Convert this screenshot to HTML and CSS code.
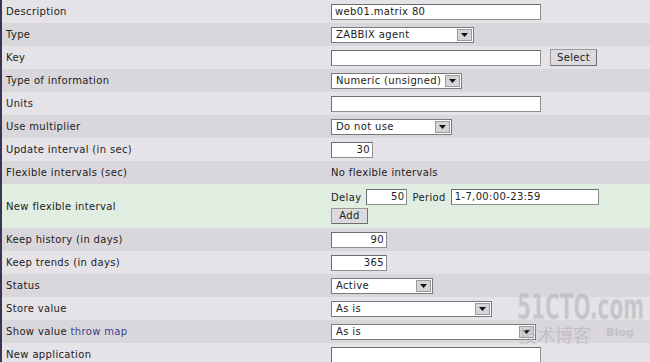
FILE: index.html
```html
<!DOCTYPE html>
<html lang="en">
<head>
    <meta charset="UTF-8">
    <title>Item</title>
    <link rel="stylesheet" href="styles.css">
</head>
<body>
<div id="form">
    <div class="row light">
        <div class="label">Description</div>
        <div class="value"><span class="input w210">web01.matrix 80</span></div>
    </div>
    <div class="row dark">
        <div class="label">Type</div>
        <div class="value"><span class="select w143"><span class="text">ZABBIX agent</span><span class="arrow"><svg width="7" height="4" viewBox="0 0 7 4"><path d="M0 0H7L3.5 4Z" fill="#111"/></svg></span></span></div>
    </div>
    <div class="row light">
        <div class="label">Key</div>
        <div class="value"><span class="input w210"></span><span class="button btn-select">Select</span></div>
    </div>
    <div class="row dark">
        <div class="label">Type of information</div>
        <div class="value"><span class="select w131"><span class="text">Numeric (unsigned)</span><span class="arrow"><svg width="7" height="4" viewBox="0 0 7 4"><path d="M0 0H7L3.5 4Z" fill="#111"/></svg></span></span></div>
    </div>
    <div class="row light">
        <div class="label">Units</div>
        <div class="value"><span class="input w210"></span></div>
    </div>
    <div class="row dark">
        <div class="label">Use multiplier</div>
        <div class="value"><span class="select w121"><span class="text">Do not use</span><span class="arrow"><svg width="7" height="4" viewBox="0 0 7 4"><path d="M0 0H7L3.5 4Z" fill="#111"/></svg></span></span></div>
    </div>
    <div class="row light">
        <div class="label">Update interval (in sec)</div>
        <div class="value"><span class="input w42 num">30</span></div>
    </div>
    <div class="row dark">
        <div class="label">Flexible intervals (sec)</div>
        <div class="value">No flexible intervals</div>
    </div>
    <div class="row green tall">
        <div class="label">New flexible interval</div>
        <div class="value stack">
            <div class="line">
                Delay <span class="input w41 num">50</span>
                Period <span class="input w147">1-7,00:00-23:59</span>
            </div>
            <div class="line"><span class="button btn-add">Add</span></div>
        </div>
    </div>
    <div class="row dark">
        <div class="label">Keep history (in days)</div>
        <div class="value"><span class="input w56 num">90</span></div>
    </div>
    <div class="row light">
        <div class="label">Keep trends (in days)</div>
        <div class="value"><span class="input w56 num">365</span></div>
    </div>
    <div class="row dark">
        <div class="label">Status</div>
        <div class="value"><span class="select w102"><span class="text">Active</span><span class="arrow"><svg width="7" height="4" viewBox="0 0 7 4"><path d="M0 0H7L3.5 4Z" fill="#111"/></svg></span></span></div>
    </div>
    <div class="row light">
        <div class="label">Store value</div>
        <div class="value"><span class="select w161"><span class="text">As is</span><span class="arrow"><svg width="7" height="4" viewBox="0 0 7 4"><path d="M0 0H7L3.5 4Z" fill="#111"/></svg></span></span></div>
    </div>
    <div class="row dark">
        <div class="label">Show value <a href="#">throw map</a></div>
        <div class="value"><span class="select w205"><span class="text">As is</span><span class="arrow"><svg width="7" height="4" viewBox="0 0 7 4"><path d="M0 0H7L3.5 4Z" fill="#111"/></svg></span></span></div>
    </div>
    <div class="row light">
        <div class="label">New application</div>
        <div class="value"><span class="input w210"></span></div>
    </div>
</div>
<div id="mark">
    <span class="big">51CTO.com</span>
    <span class="cn">技术博客</span>
    <span class="blog">Blog</span>
</div>
</body>
</html>
```

FILE: styles.css
```css
*{
    margin: 0;
    padding: 0;
    box-sizing: border-box;
}
body{
    width: 650px;
    height: 362px;
    overflow: hidden;
    background: #e4e2e6;
    font-family: "DejaVu Sans", Verdana, sans-serif;
    font-size: 10px;
    letter-spacing: 0.35px;
    color: #222;
    position: relative;
}
#form{
    border-left: 2px solid #3b3452;
}
.row{
    display: flex;
    align-items: center;
    height: 23px;
}
.row.tall{
    height: 44px;
}
.light{
    background: #e5e3e7;
}
.dark{
    background: #d9d7db;
}
.green{
    background: #dfeee0;
}
.label{
    width: 329px;
    padding-left: 4px;
}
.label a{
    color: #3e3c94;
    text-decoration: none;
}
.value{
    display: flex;
    align-items: center;
}
.stack{
    flex-direction: column;
    align-items: flex-start;
    gap: 3px;
    padding-top: 1px;
}
.line{
    display: flex;
    align-items: center;
    gap: 5px;
}
.input{
    display: inline-block;
    height: 16px;
    line-height: 14px;
    padding: 0 3px;
    background: #fff;
    border: 1px solid #8e8e8e;
    border-top-color: #6e6e6e;
    border-left-color: #6e6e6e;
    white-space: nowrap;
}
.num{
    text-align: right;
    padding-right: 2px;
}
.w210{ width: 210px; }
.w42{ width: 42px; }
.w41{ width: 41px; }
.w56{ width: 56px; }
.w147{ width: 148px; }
.select{
    display: inline-flex;
    height: 16px;
    background: #fff;
    border: 1px solid #7a7a7a;
    align-items: stretch;
}
.w143{ width: 143px; }
.w131{ width: 131px; }
.w121{ width: 121px; }
.w102{ width: 102px; }
.w161{ width: 161px; }
.w205{ width: 205px; }
.select .text{
    flex: 1;
    line-height: 14px;
    padding-left: 4px;
    white-space: nowrap;
}
.select .arrow{
    width: 15px;
    margin: 1px;
    background: #d6d4d8;
    border: 1px solid #9a9a9a;
    display: flex;
    align-items: center;
    justify-content: center;
}
.button{
    display: inline-block;
    height: 17px;
    line-height: 15px;
    text-align: center;
    background: #dcdadd;
    border: 1px solid #9b9b9b;
    border-right-color: #6e6e6e;
    border-bottom-color: #6e6e6e;
}
.btn-select{
    width: 47px;
    margin-left: 9px;
}
.btn-add{
    width: 37px;
    height: 16px;
    line-height: 14px;
}
#mark{
    position: absolute;
    left: 517px;
    top: 292px;
    width: 125px;
    height: 60px;
    color: #b9b7bb;
    opacity: 0.7;
    pointer-events: none;
    letter-spacing: 0;
}
#mark .big{
    position: absolute;
    left: 0;
    top: 0;
    font-family: "DejaVu Sans Condensed", "DejaVu Sans", sans-serif;
    font-weight: bold;
    font-size: 36px;
    line-height: 30px;
    transform: scaleX(0.62);
    transform-origin: left top;
    -webkit-text-stroke: 1px #d8d6da;
}
#mark .cn{
    position: absolute;
    left: 2px;
    top: 32px;
    font-family: "Noto Sans CJK SC", sans-serif;
    font-size: 18px;
    line-height: 20px;
}
#mark .blog{
    position: absolute;
    left: 89px;
    top: 34px;
    font-family: "DejaVu Sans", sans-serif;
    font-weight: bold;
    font-size: 11px;
}
```
